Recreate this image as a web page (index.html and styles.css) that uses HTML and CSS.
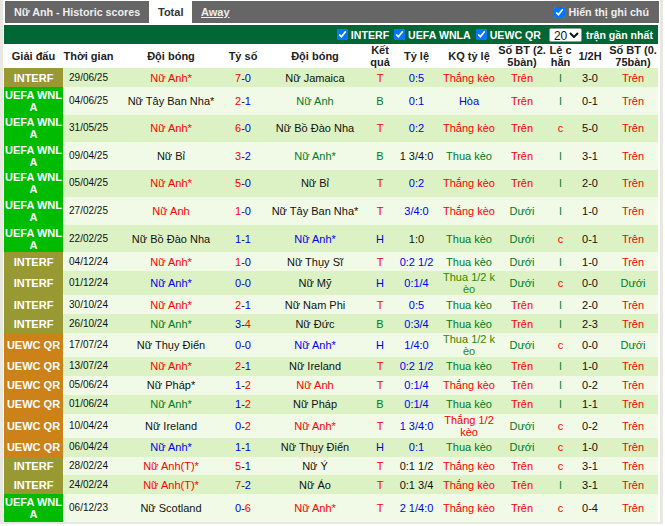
FILE: index.html
```html
<!DOCTYPE html>
<html lang="vi">
<head>
<meta charset="utf-8">
<title>Nữ Anh - Historic scores</title>
<link rel="stylesheet" href="styles.css">
</head>
<body>
<div class="panel">
  <div class="tabs">
    <div class="title">Nữ Anh - Historic scores</div>
    <div class="tab active">Total</div>
    <div class="tab link">Away</div>
    <label class="note"><input type="checkbox" checked>Hiển thị ghi chú</label>
  </div>
  <div class="filters">
    <label><input type="checkbox" checked>INTERF</label>
    <label><input type="checkbox" checked>UEFA WNLA</label>
    <label><input type="checkbox" checked>UEWC QR</label>
    <select class="count"><option>20</option></select>
    <span>trận gần nhất</span>
  </div>
  <table class="scores">
    <colgroup>
      <col class="c1"><col class="c2"><col class="c3"><col class="c4"><col class="c5"><col class="c6"><col class="c7"><col class="c8"><col class="c9"><col class="c10"><col class="c11"><col class="c12">
    </colgroup>
    <thead>
      <tr><th>Giải đấu</th><th>Thời gian</th><th>Đội bóng</th><th>Tỷ số</th><th>Đội bóng</th><th>Kết quả</th><th>Tỷ lệ</th><th>KQ tỷ lệ</th><th>Số BT (2. 5bàn)</th><th>Lẻ c hẵn</th><th>1/2H</th><th>Số BT (0. 75bàn)</th></tr>
    </thead>
    <tbody>
      <tr class="s"><td class="lg in">INTERF</td><td class="dt">29/06/25</td><td class="r">Nữ Anh*</td><td><i class="r">7</i>-<i class="b">0</i></td><td>Nữ Jamaica</td><td class="r">T</td><td class="b">0:5</td><td class="r">Thắng kèo</td><td class="r">Trên</td><td class="g">l</td><td>3-0</td><td class="r">Trên</td></tr>
      <tr class="w"><td class="lg ue">UEFA WNL A</td><td class="dt">04/06/25</td><td>Nữ Tây Ban Nha*</td><td><i class="r">2</i>-<i class="b">1</i></td><td class="g">Nữ Anh</td><td class="g">B</td><td class="b">0:1</td><td class="b">Hòa</td><td class="r">Trên</td><td class="g">l</td><td>0-1</td><td class="r">Trên</td></tr>
      <tr class="w"><td class="lg ue">UEFA WNL A</td><td class="dt">31/05/25</td><td class="r">Nữ Anh*</td><td><i class="r">6</i>-<i class="b">0</i></td><td>Nữ Bồ Đào Nha</td><td class="r">T</td><td class="b">0:2</td><td class="r">Thắng kèo</td><td class="r">Trên</td><td class="r">c</td><td>5-0</td><td class="r">Trên</td></tr>
      <tr class="w"><td class="lg ue">UEFA WNL A</td><td class="dt">09/04/25</td><td>Nữ Bỉ</td><td><i class="r">3</i>-<i class="b">2</i></td><td class="g">Nữ Anh*</td><td class="g">B</td><td>1 3/4:0</td><td class="g">Thua kèo</td><td class="r">Trên</td><td class="g">l</td><td>3-1</td><td class="r">Trên</td></tr>
      <tr class="w"><td class="lg ue">UEFA WNL A</td><td class="dt">05/04/25</td><td class="r">Nữ Anh*</td><td><i class="r">5</i>-<i class="b">0</i></td><td>Nữ Bỉ</td><td class="r">T</td><td class="b">0:2</td><td class="r">Thắng kèo</td><td class="r">Trên</td><td class="g">l</td><td>2-0</td><td class="r">Trên</td></tr>
      <tr class="w"><td class="lg ue">UEFA WNL A</td><td class="dt">27/02/25</td><td class="r">Nữ Anh</td><td><i class="r">1</i>-<i class="b">0</i></td><td>Nữ Tây Ban Nha*</td><td class="r">T</td><td class="b">3/4:0</td><td class="r">Thắng kèo</td><td class="g">Dưới</td><td class="g">l</td><td>1-0</td><td class="r">Trên</td></tr>
      <tr class="w"><td class="lg ue">UEFA WNL A</td><td class="dt">22/02/25</td><td>Nữ Bồ Đào Nha</td><td><i class="b">1</i>-<i class="b">1</i></td><td class="b">Nữ Anh*</td><td class="b">H</td><td>1:0</td><td class="g">Thua kèo</td><td class="g">Dưới</td><td class="r">c</td><td>0-1</td><td class="r">Trên</td></tr>
      <tr class="s"><td class="lg in">INTERF</td><td class="dt">04/12/24</td><td class="r">Nữ Anh*</td><td><i class="r">1</i>-<i class="b">0</i></td><td>Nữ Thụy Sĩ</td><td class="r">T</td><td class="b">0:2 1/2</td><td class="g">Thua kèo</td><td class="g">Dưới</td><td class="g">l</td><td>1-0</td><td class="r">Trên</td></tr>
      <tr class="k"><td class="lg in">INTERF</td><td class="dt">01/12/24</td><td class="b">Nữ Anh*</td><td><i class="b">0</i>-<i class="b">0</i></td><td>Nữ Mỹ</td><td class="b">H</td><td class="b">0:1/4</td><td class="o">Thua 1/2 kèo</td><td class="g">Dưới</td><td class="r">c</td><td>0-0</td><td class="g">Dưới</td></tr>
      <tr class="s"><td class="lg in">INTERF</td><td class="dt">30/10/24</td><td class="r">Nữ Anh*</td><td><i class="r">2</i>-<i class="b">1</i></td><td>Nữ Nam Phi</td><td class="r">T</td><td class="b">0:5</td><td class="g">Thua kèo</td><td class="r">Trên</td><td class="g">l</td><td>2-0</td><td class="r">Trên</td></tr>
      <tr class="s"><td class="lg in">INTERF</td><td class="dt">26/10/24</td><td class="g">Nữ Anh*</td><td><i class="b">3</i>-<i class="r">4</i></td><td>Nữ Đức</td><td class="g">B</td><td class="b">0:3/4</td><td class="g">Thua kèo</td><td class="r">Trên</td><td class="g">l</td><td>2-3</td><td class="r">Trên</td></tr>
      <tr class="k"><td class="lg uw">UEWC QR</td><td class="dt">17/07/24</td><td>Nữ Thụy Điển</td><td><i class="b">0</i>-<i class="b">0</i></td><td class="b">Nữ Anh*</td><td class="b">H</td><td class="b">1/4:0</td><td class="o">Thua 1/2 kèo</td><td class="g">Dưới</td><td class="r">c</td><td>0-0</td><td class="g">Dưới</td></tr>
      <tr class="s"><td class="lg uw">UEWC QR</td><td class="dt">13/07/24</td><td class="r">Nữ Anh*</td><td><i class="r">2</i>-<i class="b">1</i></td><td>Nữ Ireland</td><td class="r">T</td><td class="b">0:2 1/2</td><td class="g">Thua kèo</td><td class="r">Trên</td><td class="g">l</td><td>1-0</td><td class="r">Trên</td></tr>
      <tr class="s"><td class="lg uw">UEWC QR</td><td class="dt">05/06/24</td><td>Nữ Pháp*</td><td><i class="b">1</i>-<i class="r">2</i></td><td class="r">Nữ Anh</td><td class="r">T</td><td class="b">0:1/4</td><td class="r">Thắng kèo</td><td class="r">Trên</td><td class="g">l</td><td>0-2</td><td class="r">Trên</td></tr>
      <tr class="s"><td class="lg uw">UEWC QR</td><td class="dt">01/06/24</td><td class="g">Nữ Anh*</td><td><i class="b">1</i>-<i class="r">2</i></td><td>Nữ Pháp</td><td class="g">B</td><td class="b">0:1/4</td><td class="g">Thua kèo</td><td class="r">Trên</td><td class="g">l</td><td>1-1</td><td class="r">Trên</td></tr>
      <tr class="k"><td class="lg uw">UEWC QR</td><td class="dt">10/04/24</td><td>Nữ Ireland</td><td><i class="b">0</i>-<i class="r">2</i></td><td class="r">Nữ Anh*</td><td class="r">T</td><td class="b">1 3/4:0</td><td class="r">Thắng 1/2 kèo</td><td class="g">Dưới</td><td class="r">c</td><td>0-2</td><td class="r">Trên</td></tr>
      <tr class="s"><td class="lg uw">UEWC QR</td><td class="dt">06/04/24</td><td class="b">Nữ Anh*</td><td><i class="b">1</i>-<i class="b">1</i></td><td>Nữ Thụy Điển</td><td class="b">H</td><td class="b">0:1</td><td class="g">Thua kèo</td><td class="g">Dưới</td><td class="r">c</td><td>1-0</td><td class="r">Trên</td></tr>
      <tr class="s"><td class="lg in">INTERF</td><td class="dt">28/02/24</td><td class="r">Nữ Anh(T)*</td><td><i class="r">5</i>-<i class="b">1</i></td><td>Nữ Ý</td><td class="r">T</td><td>0:1 1/2</td><td class="r">Thắng kèo</td><td class="r">Trên</td><td class="r">c</td><td>3-1</td><td class="r">Trên</td></tr>
      <tr class="s"><td class="lg in">INTERF</td><td class="dt">24/02/24</td><td class="r">Nữ Anh(T)*</td><td><i class="r">7</i>-<i class="b">2</i></td><td>Nữ Áo</td><td class="r">T</td><td>0:1 3/4</td><td class="r">Thắng kèo</td><td class="r">Trên</td><td class="g">l</td><td>3-1</td><td class="r">Trên</td></tr>
      <tr class="w"><td class="lg ue">UEFA WNL A</td><td class="dt">06/12/23</td><td>Nữ Scotland</td><td><i class="b">0</i>-<i class="r">6</i></td><td class="r">Nữ Anh*</td><td class="r">T</td><td class="b">2 1/4:0</td><td class="r">Thắng kèo</td><td class="r">Trên</td><td class="r">c</td><td>0-4</td><td class="r">Trên</td></tr>
    </tbody>
  </table>
</div>
</body>
</html>
```
FILE: styles.css
```css
* { box-sizing: border-box; }
html, body { margin: 0; background: #fff; }
body { font-family: "Liberation Sans", Arial, sans-serif; font-size: 11px; color: #111; }
.panel { width: 663px; height: 524px; padding: 1px 2px 1px 1px; background: #fff; border: solid #e8e8e0; border-width: 0 3px 2px 3px; }
.tabs { display: flex; align-items: stretch; height: 22px; margin: 0 -1px 2px 1px; background: #666; color: #eee; font-weight: bold; }
.title { width: 144px; padding-left: 9px; line-height: 22px; font-size: 10.75px; }
.tab { padding: 0 9px; line-height: 23px; }
.tab.active { width: 43px; background: #fff; color: #333; }
.tab.link { text-decoration: underline; }
.note { display: flex; align-items: center; margin-left: auto; padding-right: 10px; font-size: 10.75px; }
input[type="checkbox"] { flex: none; width: 11px; height: 11px; margin: 0 3px 0 0; }
.filters { display: flex; align-items: center; justify-content: flex-end; gap: 5px; height: 19px; padding-right: 5px; background: #006633; color: #fff; font-size: 10.6px; font-weight: bold; }
.filters label { display: flex; align-items: center; }
.filters span { margin-left: -1px; }
.count { appearance: none; width: 33px; height: 14px; margin: 0 0 0 3px; padding: 0 0 0 4px; font: 12px "Liberation Sans", Arial, sans-serif; color: #111; border: 1px solid #999; border-radius: 2px; background: #fff url("data:image/svg+xml,%3Csvg xmlns='http://www.w3.org/2000/svg' width='10' height='6'%3E%3Cpath d='M1 1l4 4 4-4' fill='none' stroke='%23111' stroke-width='2'/%3E%3C/svg%3E") no-repeat right 2px center; }
.scores { width: 654px; border-collapse: collapse; table-layout: fixed; background: #fff; }
.c1 { width: 59px; } .c2 { width: 51px; } .c3 { width: 114px; } .c4 { width: 30px; } .c5 { width: 112px; } .c6 { width: 20px; }
.c7 { width: 53px; } .c8 { width: 52px; } .c9 { width: 54px; } .c10 { width: 23px; } .c11 { width: 36px; } .c12 { width: 50px; }
th { height: 24.2px; padding: 0; font-size: 11px; line-height: 12px; font-weight: bold; color: #222; text-align: center; word-break: break-all; }
td { padding: 0; text-align: center; line-height: 12px; word-break: break-all; }
td:nth-child(5), th:nth-child(5) { padding-left: 2px; }
tbody tr:nth-child(odd) { background: #dcf2c4; }
tbody tr:nth-child(even) { background: #f0fae6; }
tr.s { height: 18.9px; }
tr.w { height: 27.55px; }
tr.k { height: 23.9px; }
td.dt { font-size: 10px; }
td.lg { color: #fff; font-weight: bold; }
td.in { background: #999933; }
td.ue { background: #00bb00; }
td.uw { background: #cc8219; }
td i { font-style: normal; }
.r { color: #ff0000; }
.b { color: #0000ee; }
.g { color: #007a1f; }
.o { color: #338800; }
```
